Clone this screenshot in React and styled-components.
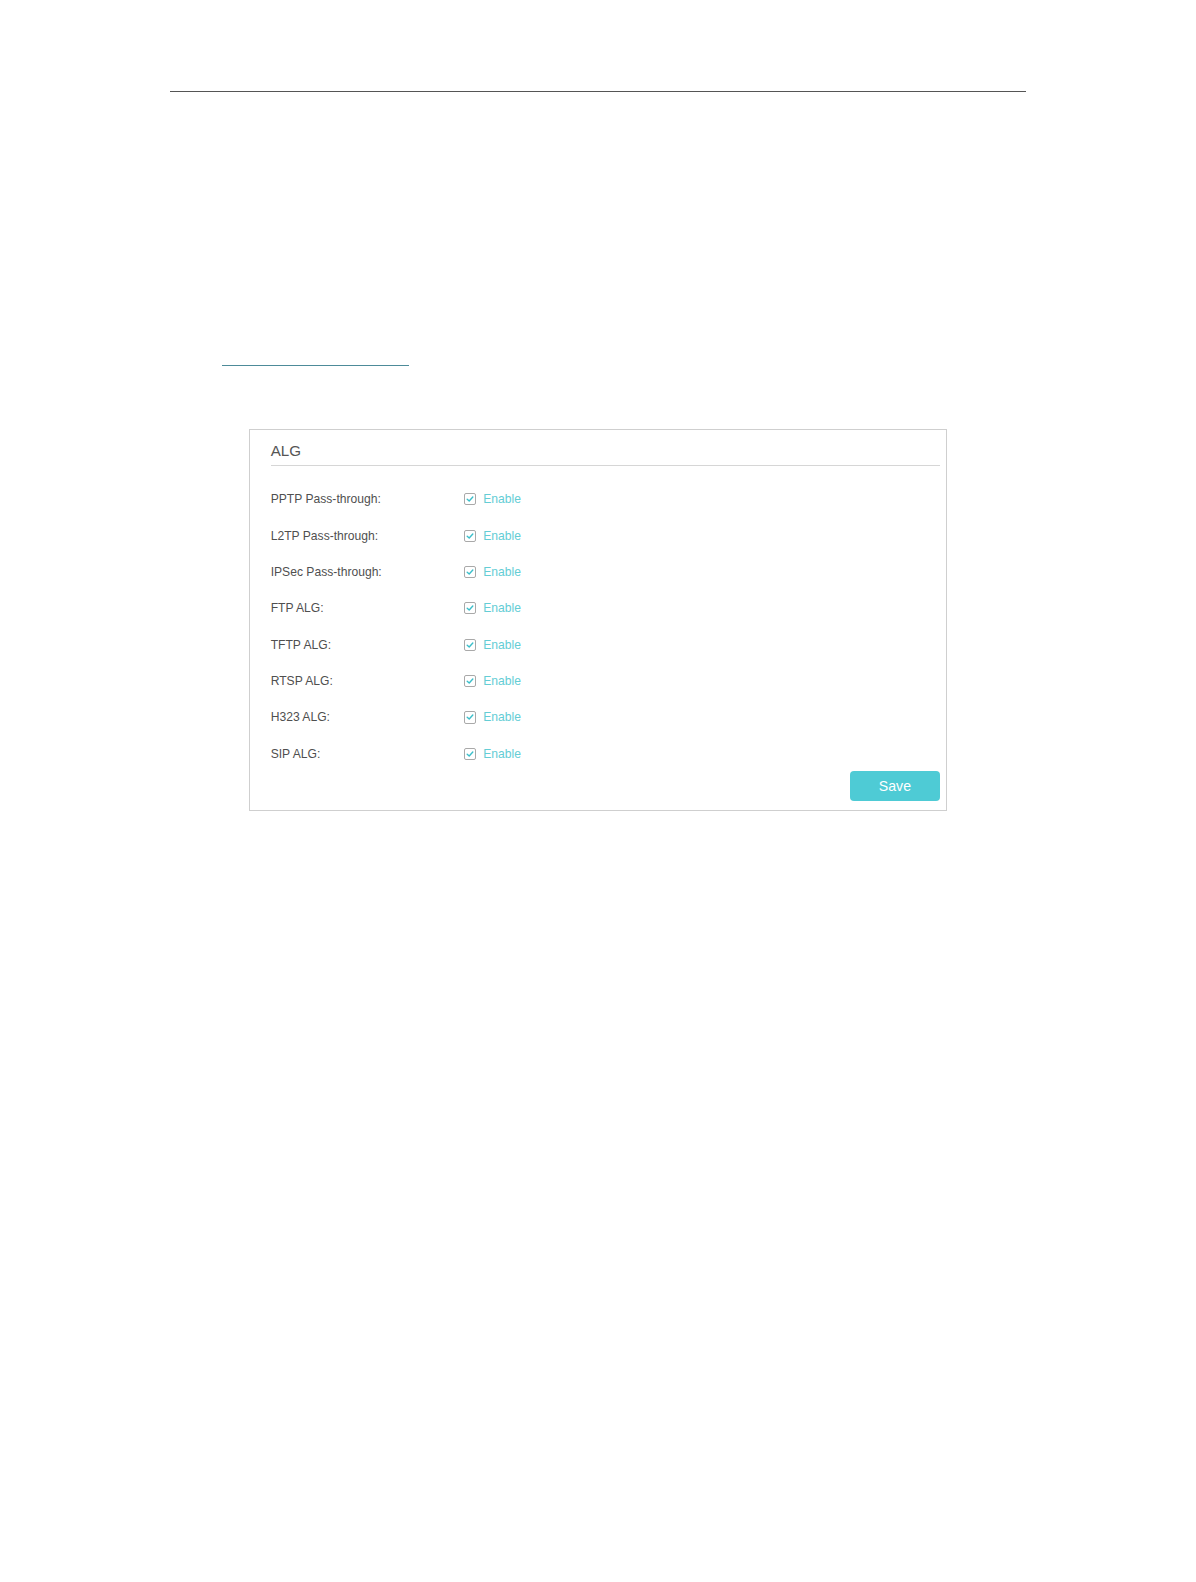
import React from "react";
import styled, { createGlobalStyle } from "styled-components";

const S = 1.0101;
const px = (n) => `${(n * S).toFixed(2)}px`;

const Global = createGlobalStyle`
  html, body { margin: 0; padding: 0; background: #fff; }
  body { font-family: "Liberation Sans", Arial, sans-serif; }
`;

const Page = styled.div`
  box-sizing: border-box;
  padding-top: ${px(90)};
  display: flex;
  flex-direction: column;
`;

const TopRule = styled.div`
  margin-left: ${px(168)};
  width: ${px(848)};
  height: ${px(1.2)};
  background: #555;
`;

const LinkLine = styled.div`
  margin-top: ${px(270)};
  margin-left: ${px(220)};
  width: ${px(185)};
  height: ${px(1.2)};
  background: #4d8b99;
`;

const Panel = styled.section`
  margin-top: ${px(62)};
  margin-left: ${px(247)};
  width: ${px(691)};
  box-sizing: border-box;
  border: 1px solid #cfcfcf;
  padding: 0 ${px(6)} ${px(9)} ${px(20)};
  display: flex;
  flex-direction: column;
`;

const Title = styled.h2`
  margin: 0;
  padding: ${px(12)} 0 ${px(5)};
  font-size: ${px(15)};
  line-height: ${px(18)};
  font-weight: normal;
  color: #555;
  border-bottom: 1px solid #d6d6d6;
`;

const Rows = styled.div`
  margin-top: ${px(15)};
  display: flex;
  flex-direction: column;
`;

const Row = styled.div`
  height: ${px(36)};
  display: flex;
  align-items: center;
`;

const Label = styled.span`
  width: ${px(191.5)};
  font-size: ${px(12)};
  color: #4f4f4f;
`;

const Check = styled.span`
  width: ${px(12)};
  height: ${px(12)};
  box-sizing: border-box;
  border: 1px solid #a9a9a9;
  border-radius: 2px;
  display: inline-flex;
  align-items: center;
  justify-content: center;
  background: #fff;
`;

const Enable = styled.span`
  margin-left: ${px(7)};
  font-size: ${px(12)};
  color: #64cdd5;
`;

const Footer = styled.div`
  margin-top: ${px(-1)};
  display: flex;
  justify-content: flex-end;
`;

const SaveButton = styled.button`
  width: ${px(90)};
  height: ${px(30)};
  border: none;
  border-radius: 4px;
  background: #4ecbd5;
  color: #fff;
  font-family: "Liberation Sans", Arial, sans-serif;
  font-size: ${px(14)};
  padding: 0;
  cursor: pointer;
`;

const items = [
  "PPTP Pass-through:",
  "L2TP Pass-through:",
  "IPSec Pass-through:",
  "FTP ALG:",
  "TFTP ALG:",
  "RTSP ALG:",
  "H323 ALG:",
  "SIP ALG:",
];

const CheckMark = () => (
  <svg width="8" height="8" viewBox="0 0 8 8">
    <path d="M1.2 4.2 L3.2 6 L6.8 2" fill="none" stroke="#3bbfca" strokeWidth="1.4" strokeLinecap="round" strokeLinejoin="round" />
  </svg>
);

export default function App() {
  return (
    <>
      <Global />
      <Page>
        <TopRule />
        <LinkLine />
        <Panel>
          <Title>ALG</Title>
          <Rows>
            {items.map((t) => (
              <Row key={t}>
                <Label>{t}</Label>
                <Check><CheckMark /></Check>
                <Enable>Enable</Enable>
              </Row>
            ))}
          </Rows>
          <Footer>
            <SaveButton>Save</SaveButton>
          </Footer>
        </Panel>
      </Page>
    </>
  );
}
